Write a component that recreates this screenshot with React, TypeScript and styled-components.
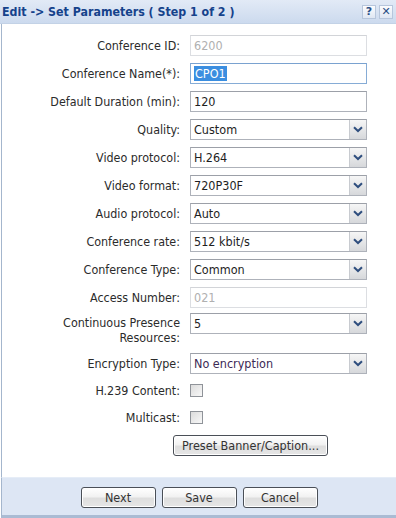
import React from "react";
import styled, { createGlobalStyle } from "styled-components";

const Global = createGlobalStyle`
  html, body { margin: 0; padding: 0; background: #fff; }
  body { font-family: "DejaVu Sans Condensed", "DejaVu Sans", Tahoma, sans-serif; }
`;

const Window = styled.div`
  width: 396px;
  height: 518px;
  display: flex;
  flex-direction: column;
  overflow: hidden;
  background: #fff;
`;

const TitleBar = styled.div`
  height: 24px;
  flex: none;
  display: flex;
  align-items: center;
  padding-left: 2px;
  background: linear-gradient(#e2eaf6, #ccdaee);
  border-bottom: 1px solid #c3d2e6;
  box-sizing: border-box;
`;

const Title = styled.div`
  flex: 1;
  color: #15428b;
  font-weight: bold;
  font-size: 12.3px;
`;

const ToolIcon = styled.div`
  width: 14px;
  height: 14px;
  margin-right: 3px;
  box-sizing: border-box;
  border: 1px solid #b7c6dc;
  background: linear-gradient(#fbfcfe, #dfe7f3);
  color: #2c4f86;
  font-size: 11px;
  font-weight: bold;
  line-height: 12px;
  text-align: center;
  font-family: "DejaVu Sans", sans-serif;
`;

const Body = styled.div`
  flex: 1;
  border-left: 1px solid #a4b6cd;
  margin-left: 1px;
  padding-top: 7px;
  display: flex;
  flex-direction: column;
`;

const Row = styled.div<{ $h: number; $top?: boolean }>`
  height: ${(p) => p.$h}px;
  display: grid;
  grid-template-columns: 178px 177px;
  column-gap: 10px;
  align-items: ${(p) => (p.$top ? "start" : "center")};
`;

const Label = styled.div<{ $pad?: number }>`
  text-align: right;
  font-size: 12.4px;
  color: #2b2b2b;
  line-height: 15px;
  padding-top: ${(p) => p.$pad || 0}px;
  white-space: nowrap;
`;

const Field = styled.div<{ $disabled?: boolean; $focus?: boolean; $mt?: number }>`
  height: 21px;
  box-sizing: border-box;
  border: 1px solid ${(p) => (p.$disabled ? "#dcdee2" : p.$focus ? "#86acd6" : "#aeb2ba")};
  border-top-color: ${(p) => (p.$disabled ? "#d2d4d8" : p.$focus ? "#7aa2d0" : "#9ca0a8")};
  background: #fff;
  display: flex;
  align-items: center;
  padding-left: 3px;
  font-size: 12.5px;
  color: ${(p) => (p.$disabled ? "#b0b0b0" : "#1e1e1e")};
  margin-top: ${(p) => p.$mt || 0}px;
`;

const Selected = styled.span`
  background: #3b8ee0;
  color: #fff;
  padding: 0 1px;
  line-height: 15px;
`;

const SelectBox = styled.div<{ $mt?: number }>`
  height: 21px;
  box-sizing: border-box;
  border: 1px solid #aeb2ba;
  border-top-color: #9ca0a8;
  background: #fff;
  display: flex;
  align-items: stretch;
  margin-top: ${(p) => p.$mt || 0}px;
`;

const SelectText = styled.div<{ $color?: string }>`
  flex: 1;
  display: flex;
  align-items: center;
  padding-left: 3px;
  font-size: 12.5px;
  color: ${(p) => p.$color || "#1e1e1e"};
`;

const Trigger = styled.div`
  width: 16px;
  border-left: 1px solid #c8cbd0;
  background: linear-gradient(#f6f6f6, #d6d8db);
  display: flex;
  align-items: center;
  justify-content: center;
`;

const Check = styled.div`
  width: 13px;
  height: 13px;
  box-sizing: border-box;
  border: 1px solid #8f9399;
  background: linear-gradient(135deg, #dcdcdc, #f8f8f8);
`;

const ButtonRow = styled.div`
  display: flex;
  padding-left: 171px;
  margin-top: 4px;
`;

const Button = styled.button<{ $w: number }>`
  width: ${(p) => p.$w}px;
  height: 21px;
  box-sizing: border-box;
  border: 1px solid #4a4f57;
  border-radius: 3px;
  background: linear-gradient(#ffffff 0%, #f2f2f2 45%, #dedede 55%, #e6e6e6 100%);
  box-shadow: inset 0 0 0 1px #ffffff;
  font-family: "DejaVu Sans Condensed", "DejaVu Sans", Tahoma, sans-serif;
  font-size: 12.5px;
  color: #333;
  padding: 0;
  cursor: pointer;
`;

const Footer = styled.div`
  height: 41px;
  flex: none;
  box-sizing: border-box;
  background: #dde6f4;
  border-top: 1px solid #e6edf7;
  border-left: 1px solid #a4b6cd;
  margin-left: 1px;
  border-bottom: 3px solid #aabbd3;
  display: flex;
  justify-content: center;
  align-items: flex-start;
  padding-top: 9px;
  gap: 6px;
`;

const Chevron = () => (
  <svg width="10" height="7" viewBox="0 0 10 7">
    <path d="M1 1.2 L5 5 L9 1.2" fill="none" stroke="#2f4e7e" strokeWidth="2" />
  </svg>
);

const Select = ({ value, color, mt }: { value: string; color?: string; mt?: number }) => (
  <SelectBox $mt={mt}>
    <SelectText $color={color}>{value}</SelectText>
    <Trigger>
      <Chevron />
    </Trigger>
  </SelectBox>
);

export default function App() {
  return (
    <>
      <Global />
      <Window>
        <TitleBar>
          <Title>Edit -&gt; Set Parameters ( Step 1 of 2 )</Title>
          <ToolIcon>?</ToolIcon>
          <ToolIcon>✕</ToolIcon>
        </TitleBar>
        <Body>
          <Row $h={28}>
            <Label>Conference ID:</Label>
            <Field $disabled>6200</Field>
          </Row>
          <Row $h={28}>
            <Label>Conference Name(*):</Label>
            <Field $focus>
              <Selected>CPO1</Selected>
            </Field>
          </Row>
          <Row $h={28}>
            <Label>Default Duration (min):</Label>
            <Field>120</Field>
          </Row>
          <Row $h={28}>
            <Label>Quality:</Label>
            <Select value="Custom" />
          </Row>
          <Row $h={28}>
            <Label>Video protocol:</Label>
            <Select value="H.264" />
          </Row>
          <Row $h={28}>
            <Label>Video format:</Label>
            <Select value="720P30F" />
          </Row>
          <Row $h={28}>
            <Label>Audio protocol:</Label>
            <Select value="Auto" />
          </Row>
          <Row $h={28}>
            <Label>Conference rate:</Label>
            <Select value="512 kbit/s" />
          </Row>
          <Row $h={28}>
            <Label>Conference Type:</Label>
            <Select value="Common" />
          </Row>
          <Row $h={28}>
            <Label>Access Number:</Label>
            <Field $disabled>021</Field>
          </Row>
          <Row $h={38} $top>
            <Label $pad={4}>
              Continuous Presence
              <br />
              Resources:
            </Label>
            <Select value="5" mt={2} />
          </Row>
          <Row $h={28}>
            <Label>Encryption Type:</Label>
            <Select value="No encryption" color="#3d2a55" />
          </Row>
          <Row $h={26}>
            <Label>H.239 Content:</Label>
            <Check />
          </Row>
          <Row $h={28}>
            <Label>Multicast:</Label>
            <Check />
          </Row>
          <ButtonRow>
            <Button $w={155}>Preset Banner/Caption...</Button>
          </ButtonRow>
        </Body>
        <Footer>
          <Button $w={75}>Next</Button>
          <Button $w={75}>Save</Button>
          <Button $w={75}>Cancel</Button>
        </Footer>
      </Window>
    </>
  );
}
